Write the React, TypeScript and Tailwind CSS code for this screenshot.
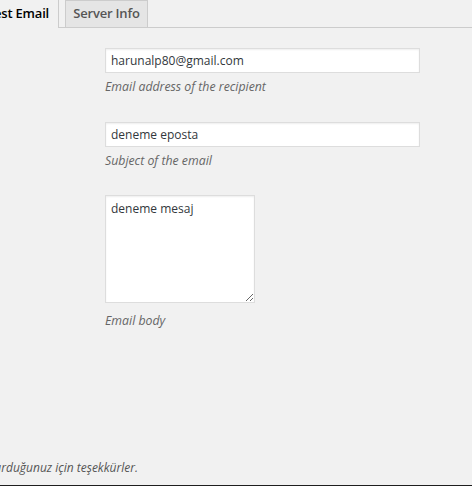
import React from "react";

export default function App() {
  const font = { fontFamily: '"Open Sans", "Noto Sans", sans-serif' };
  const inputCls =
    "w-[315px] h-[25px] border border-[#ddd] bg-white px-[5px] text-[12px] text-[#32373c] shadow-[inset_0_1px_2px_rgba(0,0,0,0.07)] outline-none";
  return (
    <div className="w-[472px] h-[486px] bg-[#f1f1f1] overflow-hidden flex flex-col text-[#444]" style={font}>
      {/* tabs */}
      <div className="h-[28px] border-b border-[#ccc] flex items-end shrink-0">
        <div className="h-[28px] -ml-[10px] w-[69px] border-r border-[#ccc] bg-[#f1f1f1] flex items-center justify-end pr-[9px] text-[13px] font-semibold tracking-[-0.2px] text-black mb-[-1px] whitespace-nowrap">
          Test Email
        </div>
        <div className="ml-[6px] h-[27px] w-[83px] border border-b-0 border-[#ccc] bg-[#e5e5e5] flex items-center justify-center text-[13px] font-semibold tracking-[-0.2px] text-[#555] whitespace-nowrap">
          Server Info
        </div>
      </div>

      {/* form */}
      <div className="pl-[105px] pt-[20px] flex flex-col">
        <input readOnly value="harunalp80@gmail.com" className={inputCls} style={font} />
        <p className="mt-[4px] text-[12.3px] italic text-[#666] leading-[20px]">Email address of the recipient</p>

        <input readOnly value="deneme eposta" className={"mt-[25px] " + inputCls} style={font} />
        <p className="mt-[4px] text-[12.3px] italic text-[#666] leading-[20px]">Subject of the email</p>

        <textarea
          readOnly
          value="deneme mesaj"
          className="mt-[24px] w-[150px] h-[108px] border border-[#ddd] bg-white px-[5px] pt-[4px] text-[12px] text-[#32373c] shadow-[inset_0_1px_2px_rgba(0,0,0,0.07)] outline-none resize"
          style={font}
        />
        <p className="mt-[8px] text-[12.3px] italic text-[#666] leading-[20px]">Email body</p>
      </div>

      <div className="flex-1" />

      <div className="w-[141px] overflow-hidden flex justify-end mb-[7px]">
        <p className="text-[12px] italic text-[#555] whitespace-nowrap leading-[20px] pr-[3px]">
          WordPress ile oluşturduğunuz için teşekkürler.
        </p>
      </div>
      <div className="h-[1px] bg-[#1e1e1e] shrink-0" />
    </div>
  );
}
